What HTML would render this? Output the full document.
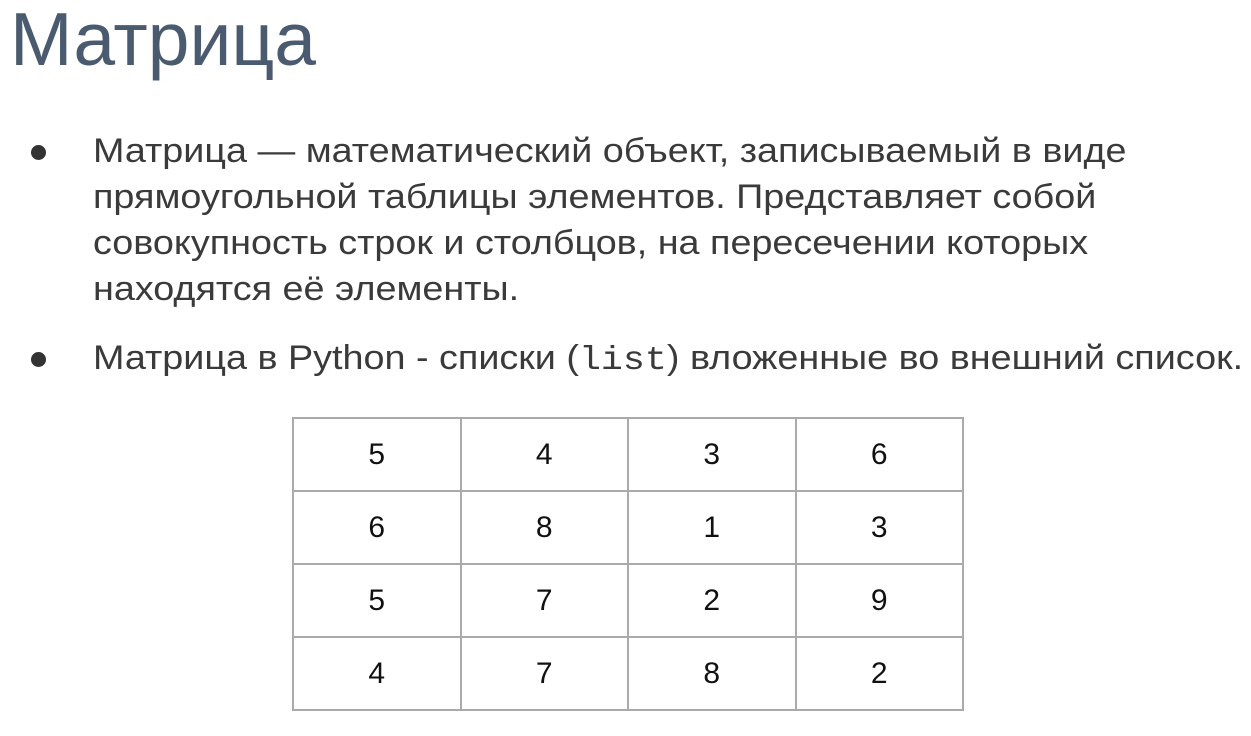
<!DOCTYPE html>
<html><head><meta charset="utf-8"><style>
body{margin:0;width:1251px;height:736px;background:#fff;font-family:"Liberation Sans",sans-serif;overflow:hidden;position:relative}
.t{position:absolute;left:10px;top:1px;font-size:75px;line-height:76px;color:#4a5b70}
.p{position:absolute;left:93px;font-size:34px;line-height:46px;color:#3a3a3a;white-space:nowrap;transform:scaleX(1.11);transform-origin:0 0}
.d{position:absolute;left:31px;width:15px;height:15px;border-radius:50%;background:#333}
code{font-family:"Liberation Mono",monospace;font-size:33px}
table{position:absolute;left:292px;top:417px;border-collapse:collapse;table-layout:fixed;width:672px}
td{border:2px solid #aaa;height:71px;text-align:center;font-size:30px;color:#111;padding:0}
</style></head><body>
<div class="t">Матрица</div>
<div class="d" style="top:145px"></div>
<div class="p" style="top:128px">Матрица — математический объект, записываемый в виде<br>прямоугольной таблицы элементов. Представляет собой<br>совокупность строк и столбцов, на пересечении которых<br>находятся её элементы.</div>
<div class="d" style="top:352px"></div>
<div class="p" style="top:335px">Матрица в Python - списки (<code>list</code>) вложенные во внешний список.</div>
<table>
<tr><td>5</td><td>4</td><td>3</td><td>6</td></tr>
<tr><td>6</td><td>8</td><td>1</td><td>3</td></tr>
<tr><td>5</td><td>7</td><td>2</td><td>9</td></tr>
<tr><td>4</td><td>7</td><td>8</td><td>2</td></tr>
</table>
</body></html>
